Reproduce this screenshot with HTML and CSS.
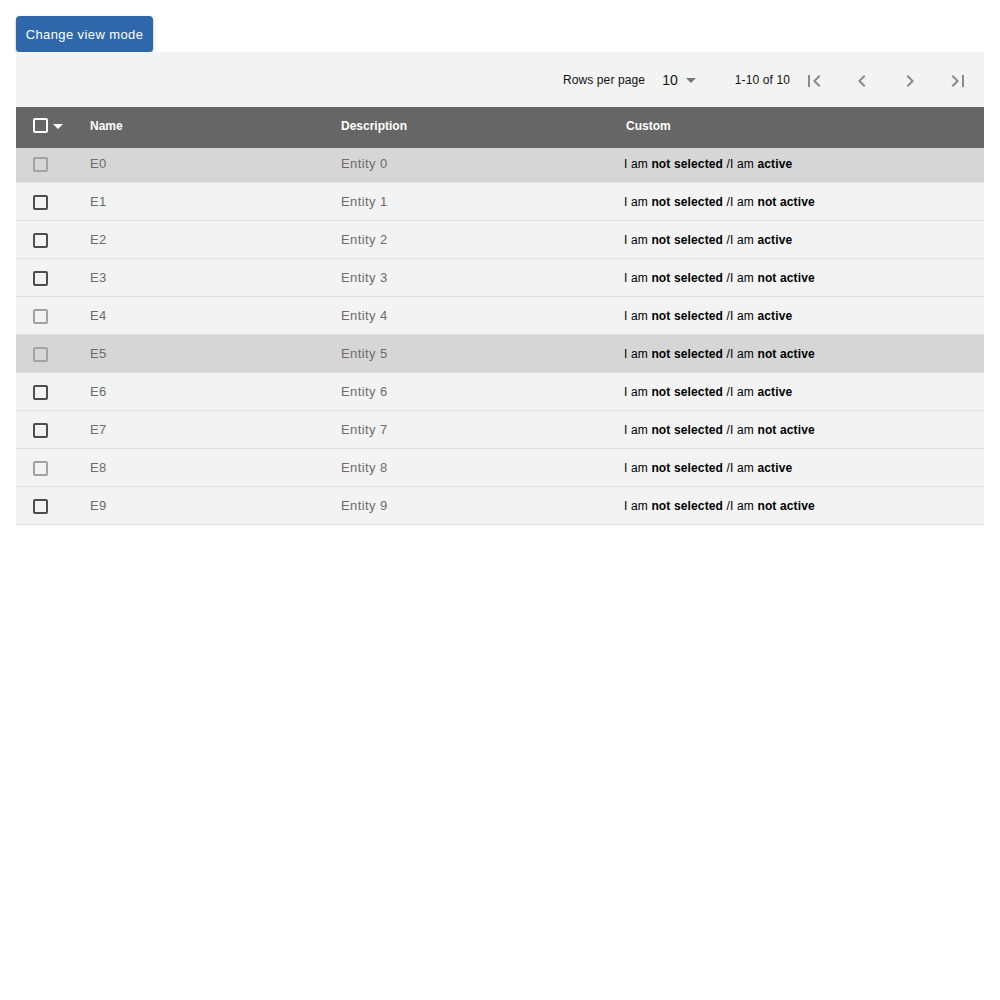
FILE: index.html
```html
<!DOCTYPE html>
<html>
<head>
<meta charset="utf-8">
<link rel="stylesheet" href="styles.css">
</head>
<body>
<div class="page">
  <button class="btn">Change view mode</button>
  <div class="grid">
    <div class="toolbar">
      <span class="rpp">Rows per page</span>
      <span class="select">10<svg class="caret" width="10" height="5" viewBox="0 0 10 5"><path d="M0 0h10L5 5z" fill="#757575"/></svg></span>
      <span class="range">1-10 of 10</span>
      <span class="ibtn"><svg width="24" height="24" viewBox="0 0 24 24"><path d="M18.41 16.59L13.82 12l4.59-4.59L17 6l-6 6 6 6zM6 6h2v12H6z" fill="#8a8a8a"/></svg></span>
      <span class="ibtn"><svg width="24" height="24" viewBox="0 0 24 24"><path d="M15.41 7.41L14 6l-6 6 6 6 1.41-1.41L10.83 12z" fill="#8a8a8a"/></svg></span>
      <span class="ibtn"><svg width="24" height="24" viewBox="0 0 24 24"><path d="M10 6L8.59 7.41 13.17 12l-4.58 4.590L10 18l6-6z" fill="#8a8a8a"/></svg></span>
      <span class="ibtn"><svg width="24" height="24" viewBox="0 0 24 24"><path d="M5.59 7.41L10.18 12l-4.59 4.59L7 18l6-6-6-6zM16 6h2v12h-2z" fill="#8a8a8a"/></svg></span>
    </div>
    <div class="head">
      <div class="c-check"><span class="box box-white"></span><svg class="hcaret" width="10" height="5" viewBox="0 0 10 5"><path d="M0 0h10L5 5z" fill="#fff"/></svg></div>
      <div class="h-name">Name</div>
      <div class="h-desc">Description</div>
      <div class="h-custom">Custom</div>
    </div>
    <div class="body">
      <div class="row sel"><div class="c-check"><span class="box dis"></span></div><div class="c-name">E0</div><div class="c-desc">Entity 0</div><div class="c-custom">I am <b>not selected</b> /I am <b>active</b></div></div>
      <div class="row"><div class="c-check"><span class="box"></span></div><div class="c-name">E1</div><div class="c-desc">Entity 1</div><div class="c-custom">I am <b>not selected</b> /I am <b>not active</b></div></div>
      <div class="row"><div class="c-check"><span class="box"></span></div><div class="c-name">E2</div><div class="c-desc">Entity 2</div><div class="c-custom">I am <b>not selected</b> /I am <b>active</b></div></div>
      <div class="row"><div class="c-check"><span class="box"></span></div><div class="c-name">E3</div><div class="c-desc">Entity 3</div><div class="c-custom">I am <b>not selected</b> /I am <b>not active</b></div></div>
      <div class="row"><div class="c-check"><span class="box dis"></span></div><div class="c-name">E4</div><div class="c-desc">Entity 4</div><div class="c-custom">I am <b>not selected</b> /I am <b>active</b></div></div>
      <div class="row sel"><div class="c-check"><span class="box dis"></span></div><div class="c-name">E5</div><div class="c-desc">Entity 5</div><div class="c-custom">I am <b>not selected</b> /I am <b>not active</b></div></div>
      <div class="row"><div class="c-check"><span class="box"></span></div><div class="c-name">E6</div><div class="c-desc">Entity 6</div><div class="c-custom">I am <b>not selected</b> /I am <b>active</b></div></div>
      <div class="row"><div class="c-check"><span class="box"></span></div><div class="c-name">E7</div><div class="c-desc">Entity 7</div><div class="c-custom">I am <b>not selected</b> /I am <b>not active</b></div></div>
      <div class="row"><div class="c-check"><span class="box dis"></span></div><div class="c-name">E8</div><div class="c-desc">Entity 8</div><div class="c-custom">I am <b>not selected</b> /I am <b>active</b></div></div>
      <div class="row"><div class="c-check"><span class="box"></span></div><div class="c-name">E9</div><div class="c-desc">Entity 9</div><div class="c-custom">I am <b>not selected</b> /I am <b>not active</b></div></div>
    </div>
  </div>
</div>
</body>
</html>
```
FILE: styles.css
```css
html, body {
  margin: 0;
  padding: 0;
  background: #fff;
}
.page {
  padding: 16px;
  font-family: "Liberation Sans", Arial, sans-serif;
}
.btn {
  display: block;
  height: 36px;
  width: 137px;
  padding: 0;
  border: none;
  border-radius: 4px;
  background: #2f67ab;
  color: #fff;
  font-family: "Liberation Sans", Arial, sans-serif;
  font-size: 13px;
  letter-spacing: 0.4px;
  box-shadow: 0 1px 3px rgba(0,0,0,0.3), 0 1px 1px rgba(0,0,0,0.14);
  cursor: pointer;
}
.grid {
  width: 968px;
}
.toolbar {
  height: 55px;
  background: #f3f3f3;
  display: flex;
  align-items: center;
  justify-content: flex-end;
  padding-right: 2px;
  font-size: 12px;
  letter-spacing: 0.12px;
  color: #111;
}
.rpp {
  margin-right: 17px;
}
.select {
  display: flex;
  align-items: center;
  font-size: 14px;
  letter-spacing: 0;
  margin-right: 39px;
}
.caret {
  margin-left: 8px;
  margin-top: 2px;
}
.ibtn {
  width: 48px;
  height: 48px;
  display: flex;
  align-items: center;
  justify-content: center;
  margin-top: 3px;
}
.head {
  position: relative;
  z-index: 1;
  height: 41px;
  background: #666666;
  color: #fff;
  font-size: 12px;
  font-weight: bold;
  display: grid;
  grid-template-columns: 74px 251px 285px 1fr;
  margin-bottom: -3px;
}
.head > div {
  padding-top: 12px;
}
.head .c-check {
  padding-top: 11px;
}
.c-check {
  display: flex;
  align-items: flex-start;
  padding-left: 17px;
}
.hcaret {
  margin-left: 5px;
  margin-top: 6px;
}
.box {
  display: block;
  width: 15px;
  height: 15px;
  box-sizing: border-box;
  border: 2px solid #4d4d4d;
  border-radius: 2px;
}
.box-white {
  border-color: #fff;
}
.box.dis {
  border-color: #a2a2a2;
}
.row {
  display: grid;
  grid-template-columns: 74px 251px 283px 1fr;
  height: 38px;
  box-sizing: border-box;
  border-bottom: 1px solid #e0e0e0;
  background: #f3f3f3;
  align-items: center;
}
.row.sel {
  background: #d6d6d6;
}
.row .c-check {
  align-items: center;
  margin-top: 2px;
}
.c-name, .c-desc {
  font-size: 13px;
  color: #6b6b6b;
  letter-spacing: 0.4px;
}
.c-custom {
  font-size: 12px;
  color: #000;
  letter-spacing: 0.14px;
}
.c-custom b {
  font-weight: bold;
}
```
